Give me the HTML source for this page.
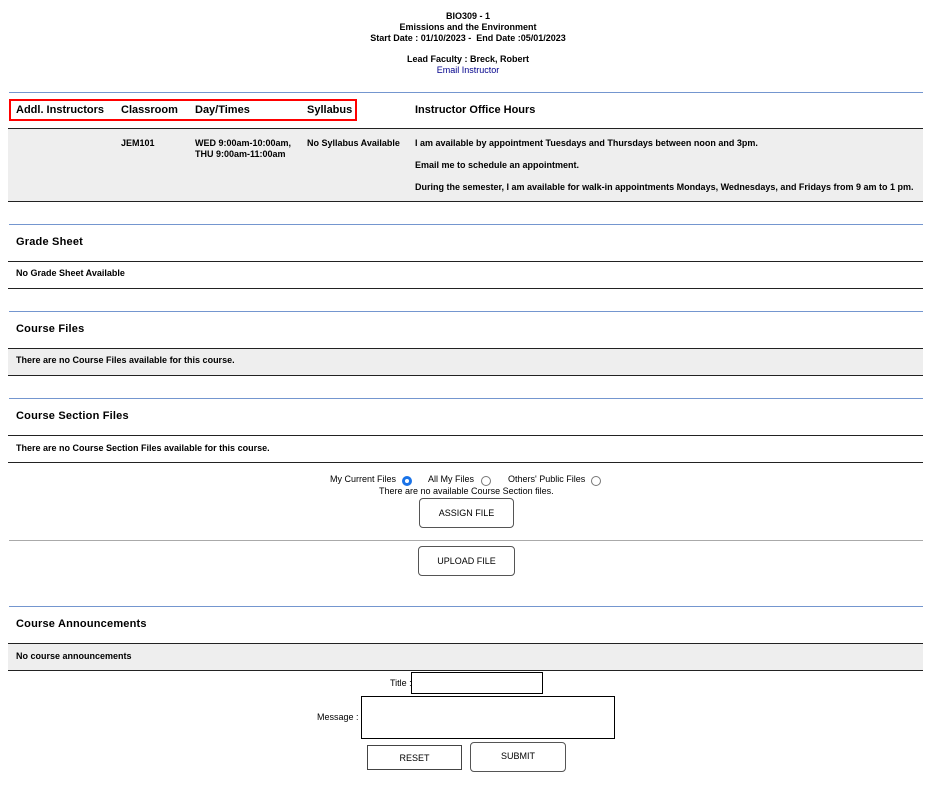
<!DOCTYPE html>
<html><head><meta charset="utf-8"><style>
*{margin:0;padding:0;box-sizing:border-box}
body{width:936px;height:789px;background:#fff;position:relative;font-family:"Liberation Sans",Arial,sans-serif;color:#000;overflow:hidden}
.a{position:absolute;white-space:nowrap}
.c{position:absolute;left:0;width:936px;text-align:center;font-size:9px;font-weight:bold;white-space:nowrap}
.blue{position:absolute;left:9px;width:914px;height:1px;background:#7496cf}
.blk{position:absolute;left:8px;width:915px;height:1px;background:#222}
.gray{position:absolute;left:8px;width:915px;background:#eee}
.t{position:absolute;left:16px;font-size:11px;font-weight:bold;letter-spacing:0.2px}
.s{position:absolute;font-size:9px;font-weight:bold;white-space:nowrap}
.h{position:absolute;font-size:11px;font-weight:bold;top:104px;white-space:nowrap}
.n{position:absolute;font-size:9px;white-space:nowrap}
.btn{position:absolute;border:1px solid #555;border-radius:4px;font-size:9px;text-align:center;background:#fff}
.rad{position:absolute;width:10px;height:10px;border-radius:50%;border:1px solid #777;background:#fff}
</style></head><body>
<div class="c" style="top:11px">BIO309 - 1</div>
<div class="c" style="top:22px">Emissions and the Environment</div>
<div class="c" style="top:33px">Start Date : 01/10/2023 -&nbsp; End Date :05/01/2023</div>
<div class="c" style="top:54px">Lead Faculty : Breck, Robert</div>
<div class="c" style="top:65px;color:#00008b;font-weight:normal">Email Instructor</div>

<div class="blue" style="top:92px"></div>
<div class="a" style="left:9px;top:99px;width:348px;height:22px;border:2px solid #f00"></div>
<div class="h" style="left:16px">Addl. Instructors</div>
<div class="h" style="left:121px">Classroom</div>
<div class="h" style="left:195px">Day/Times</div>
<div class="h" style="left:307px">Syllabus</div>
<div class="h" style="left:415px">Instructor Office Hours</div>
<div class="blk" style="top:128px"></div>
<div class="gray" style="top:129px;height:72px"></div>
<div class="blk" style="top:201px"></div>
<div class="s" style="left:121px;top:138px">JEM101</div>
<div class="s" style="left:195px;top:138px;line-height:11px">WED 9:00am-10:00am,<br>THU 9:00am-11:00am</div>
<div class="s" style="left:307px;top:138px">No Syllabus Available</div>
<div class="s" style="left:415px;top:138px">I am available by appointment Tuesdays and Thursdays between noon and 3pm.</div>
<div class="s" style="left:415px;top:160px">Email me to schedule an appointment.</div>
<div class="s" style="left:415px;top:182px">During the semester, I am available for walk-in appointments Mondays, Wednesdays, and Fridays from 9 am to 1 pm.</div>

<div class="blue" style="top:224px"></div>
<div class="t" style="top:236px">Grade Sheet</div>
<div class="blk" style="top:261px"></div>
<div class="s" style="left:16px;top:268px">No Grade Sheet Available</div>
<div class="blk" style="top:288px"></div>

<div class="blue" style="top:311px"></div>
<div class="t" style="top:323px">Course Files</div>
<div class="blk" style="top:348px"></div>
<div class="gray" style="top:349px;height:26px"></div>
<div class="s" style="left:16px;top:355px">There are no Course Files available for this course.</div>
<div class="blk" style="top:375px"></div>

<div class="blue" style="top:398px"></div>
<div class="t" style="top:410px">Course Section Files</div>
<div class="blk" style="top:435px"></div>
<div class="s" style="left:16px;top:443px">There are no Course Section Files available for this course.</div>
<div class="blk" style="top:462px"></div>

<div class="n" style="left:330px;top:474px">My Current Files</div>
<div class="rad" style="left:402px;top:476px;border:3px solid #1a73e8;background:#fff"></div>
<div class="n" style="left:428px;top:474px">All My Files</div>
<div class="rad" style="left:481px;top:476px"></div>
<div class="n" style="left:508px;top:474px">Others' Public Files</div>
<div class="rad" style="left:591px;top:476px"></div>
<div class="n" style="left:379px;top:486px">There are no available Course Section files.</div>
<div class="btn" style="left:419px;top:498px;width:95px;height:30px;line-height:28px">ASSIGN FILE</div>
<div class="a" style="left:9px;top:540px;width:914px;height:1px;background:#aaa"></div>
<div class="btn" style="left:418px;top:546px;width:97px;height:30px;line-height:28px">UPLOAD FILE</div>

<div class="blue" style="top:606px"></div>
<div class="t" style="top:618px">Course Announcements</div>
<div class="blk" style="top:643px"></div>
<div class="gray" style="top:644px;height:26px"></div>
<div class="s" style="left:16px;top:651px">No course announcements</div>
<div class="blk" style="top:670px"></div>

<div class="n" style="left:390px;top:678px">Title :</div>
<div class="a" style="left:411px;top:672px;width:132px;height:22px;border:1px solid #000"></div>
<div class="n" style="left:317px;top:712px">Message :</div>
<div class="a" style="left:361px;top:696px;width:254px;height:43px;border:1px solid #000"></div>
<div class="a" style="left:367px;top:745px;width:95px;height:25px;border:1px solid #444;font-size:9px;text-align:center;line-height:24px">RESET</div>
<div class="btn" style="left:470px;top:742px;width:96px;height:30px;line-height:27px">SUBMIT</div>
</body></html>
